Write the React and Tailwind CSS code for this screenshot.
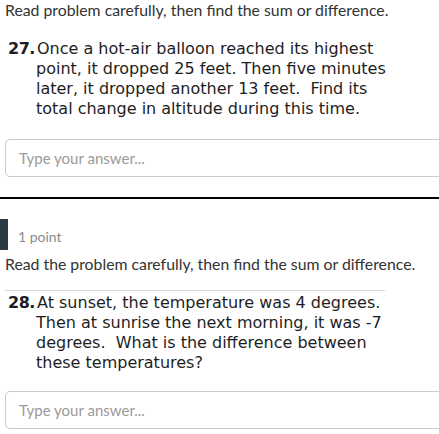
const lato = { fontFamily: 'Lato, "Open Sans", sans-serif' };

const Problem = ({ num, lines }) => (
  <div
    className="flex text-[16px] leading-[20px] text-[#1e1e1e]"
    style={{ fontFamily: '"DejaVu Sans", sans-serif' }}
  >
    <span className="w-[29px] shrink-0 font-bold tracking-[-0.5px]">{num}.</span>
    <div>
      {lines.map((line, i) => (
        <div key={i} className={`whitespace-pre ${i === 0 ? '' : '-ml-px'}`}>
          {line}
        </div>
      ))}
    </div>
  </div>
);

const AnswerBox = () => (
  <div className="ml-[5px] -mr-2 h-[38px] rounded-[5px] border border-[#c7cdd1] flex items-center pl-[13px]">
    <span className="text-[15px] text-[#9a9a9a]" style={lato}>Type your answer...</span>
  </div>
);

export default function App() {
  return (
    <div className="w-[439px] h-[434px] overflow-hidden bg-white">
      <div className="pl-[5px] text-[15.8px] leading-[19px] text-[#333]" style={lato}>
        Read problem carefully, then find the sum or difference.
      </div>

      <div className="mt-[20px] pl-[8px]">
        <Problem
          num="27"
          lines={[
            'Once a hot-air balloon reached its highest',
            'point, it dropped 25 feet. Then five minutes',
            'later, it dropped another 13 feet.  Find its',
            'total change in altitude during this time.',
          ]}
        />
      </div>

      <div className="mt-5">
        <AnswerBox />
      </div>

      <div className="mt-5 h-[2px] bg-black" />

      <div className="mt-[20px] flex items-center">
        <div className="w-2 h-[31px] bg-[#2c3a44]" />
        <span className="ml-[10px] pt-[3px] text-[14px] text-[#8b8b8b]" style={lato}>1 point</span>
      </div>

      <div className="mt-1 pl-[5px] text-[15.8px] leading-[20px] text-[#333]" style={lato}>
        Read the problem carefully, then find the sum or difference.
      </div>

      <div className="mt-4 ml-[5px] w-[380px] h-px bg-[#d6d6d6]" />

      <div className="mt-[2px] pl-[8px]">
        <Problem
          num="28"
          lines={[
            'At sunset, the temperature was 4 degrees.',
            'Then at sunrise the next morning, it was -7',
            'degrees.  What is the difference between',
            'these temperatures?',
          ]}
        />
      </div>

      <div className="mt-[18px]">
        <AnswerBox />
      </div>
    </div>
  );
}
